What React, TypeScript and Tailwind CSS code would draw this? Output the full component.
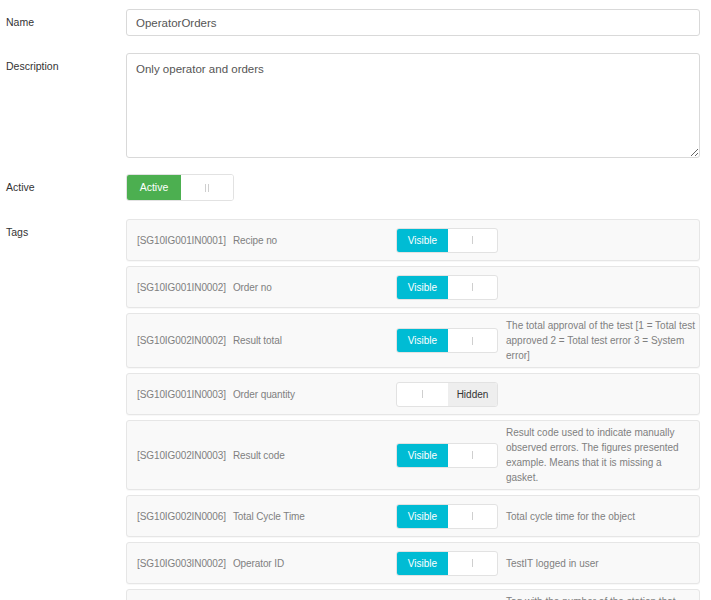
import React from 'react';

type Tag = {
  id: string;
  name: string;
  visible: boolean;
  description?: string;
};

const tags: Tag[] = [
  { id: 'SG10IG001IN0001', name: 'Recipe no', visible: true },
  { id: 'SG10IG001IN0002', name: 'Order no', visible: true },
  {
    id: 'SG10IG002IN0002',
    name: 'Result total',
    visible: true,
    description: 'The total approval of the test [1 = Total test approved 2 = Total test error 3 = System error]',
  },
  { id: 'SG10IG001IN0003', name: 'Order quantity', visible: false },
  {
    id: 'SG10IG002IN0003',
    name: 'Result code',
    visible: true,
    description:
      'Result code used to indicate manually observed errors. The figures presented example. Means that it is missing a gasket.',
  },
  { id: 'SG10IG002IN0006', name: 'Total Cycle Time', visible: true, description: 'Total cycle time for the object' },
  { id: 'SG10IG003IN0002', name: 'Operator ID', visible: true, description: 'TestIT logged in user' },
  {
    id: 'SG10IG003IN0004',
    name: 'Station number',
    visible: true,
    description: 'Tag with the number of the station that holds the specific product and is used for the report.',
  },
];

const Handle = ({ double }: { double?: boolean }) => (
  <div className="flex gap-[2px]">
    <span className="block w-px h-[8px] bg-[#cfcfcf]" />
    {double && <span className="block w-px h-[8px] bg-[#cfcfcf]" />}
  </div>
);

const VisibleSwitch = ({ on }: { on: boolean }) => (
  <div className="flex w-[102px] h-[25px] shrink-0 rounded-[3px] border border-[#e2e2e2] bg-white overflow-hidden text-[10px]">
    {on ? (
      <>
        <div className="w-[51px] flex items-center justify-center bg-[#00bcd4] text-white">Visible</div>
        <div className="flex-1 flex items-center justify-center">
          <Handle />
        </div>
      </>
    ) : (
      <>
        <div className="w-[51px] flex items-center justify-center">
          <Handle />
        </div>
        <div className="flex-1 flex items-center justify-center bg-[#eeeeee] text-[#333]">Hidden</div>
      </>
    )}
  </div>
);

const Label = ({ children }: { children: React.ReactNode }) => (
  <div className="w-[126px] shrink-0 pl-[6px] leading-[27px] text-[10.5px] text-[#333]">{children}</div>
);

export default function App() {
  return (
    <div className="w-[711px] h-[600px] overflow-hidden bg-white pt-[9px] font-['Liberation_Sans',Arial,sans-serif]">
      <div className="flex pr-[11px]">
        <Label>Name</Label>
        <input
          readOnly
          defaultValue="OperatorOrders"
          className="flex-1 h-[27px] rounded-[3px] border border-[#d9d9d9] px-[9px] text-[11.5px] text-[#555] outline-none"
        />
      </div>

      <div className="flex pr-[11px] mt-[17px]">
        <Label>Description</Label>
        <textarea
          readOnly
          defaultValue="Only operator and orders"
          className="flex-1 h-[105px] rounded-[3px] border border-[#d9d9d9] px-[9px] pt-[7px] text-[11.5px] text-[#555] outline-none"
        />
      </div>

      <div className="flex mt-[16px]">
        <Label>Active</Label>
        <div className="flex w-[108px] h-[27px] rounded-[3px] border border-[#e2e2e2] overflow-hidden text-[10.5px]">
          <div className="w-[54px] flex items-center justify-center bg-[#4caf50] text-white">Active</div>
          <div className="flex-1 flex items-center justify-center bg-white">
            <Handle double />
          </div>
        </div>
      </div>

      <div className="flex pr-[11px] mt-[18px]">
        <Label>Tags</Label>
        <div className="flex-1 flex flex-col gap-[5px]">
          {tags.map(tag => (
            <div
              key={tag.id}
              className="flex items-center min-h-[42px] py-[4px] pl-[10px] pr-[3px] rounded-[3px] border border-[#e6e6e6] bg-[#f9f9f9] shadow-[0_1px_1px_rgba(0,0,0,0.03)]"
            >
              <div className="w-[259px] shrink-0 flex text-[10px] tracking-[-0.1px] text-[#808080]">
                <span>[{tag.id}]</span>
                <span className="ml-[7px]">{tag.name}</span>
              </div>
              <VisibleSwitch on={tag.visible} />
              <div className="flex-1 ml-[8px] text-[10px] leading-[15px] text-[#808080]">{tag.description}</div>
            </div>
          ))}
        </div>
      </div>
    </div>
  );
}
